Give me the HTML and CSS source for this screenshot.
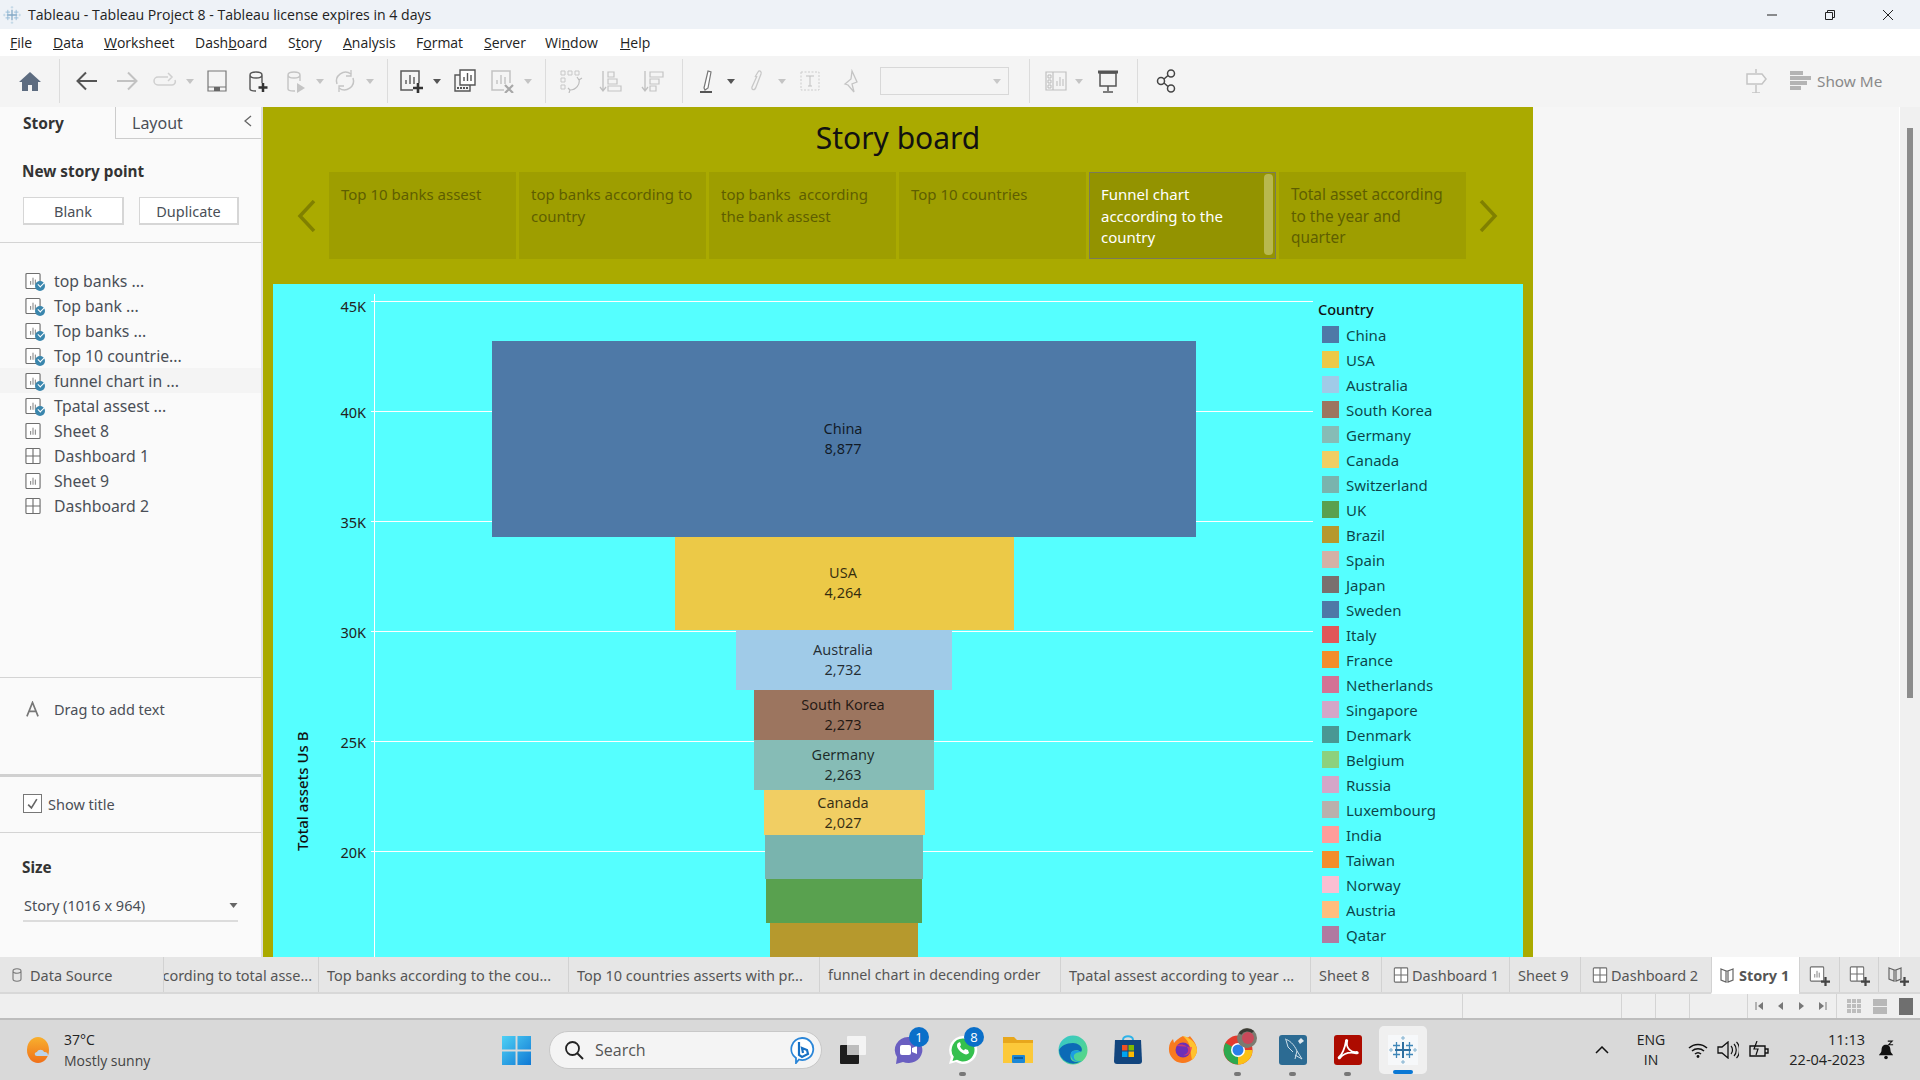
FILE: index.html
```html
<!DOCTYPE html>
<html lang="en">
<head>
<meta charset="utf-8">
<title>Tableau - Tableau Project 8</title>
<link rel="stylesheet" href="styles.css">
</head>
<body>
<svg class="defs" width="0" height="0" aria-hidden="true">
  <defs>
    <symbol id="tableau" viewBox="0 0 28 28">
      <g fill="none" stroke-linecap="butt">
        <path d="M14 6v16M6 14h16" stroke="#2f6f9f" stroke-width="2"/>
        <path d="M7.5 6v7M4 9.500h7M20.500 6v7M17 9.500h7M7.500 15v7M4 18.500h7M20.500 15v7M17 18.500h7" stroke="#3f86b8" stroke-width="1.300"/>
        <path d="M14 0v4M12 2h4M14 24v4M12 26h4M2 12v4M0 14h4M26 12v4M24 14h4" stroke="#7fb0cf" stroke-width="1"/>
      </g>
    </symbol>
    <symbol id="sheet" viewBox="0 0 17 18">
      <rect x="1" y="1" width="15" height="16" rx="1" fill="#fff" stroke="#6e6e6e" stroke-width="1.2"/>
      <path d="M6 13V9M8.5 13V5.500M11 13V7.500" stroke="#777" stroke-width="1"/>
    </symbol>
    <symbol id="dash" viewBox="0 0 17 18">
      <rect x="1" y="1" width="15" height="16" rx="1" fill="#fff" stroke="#6e6e6e" stroke-width="1.200"/>
      <path d="M8.500 1v16M1 9h15" stroke="#6e6e6e" stroke-width="1.200"/>
    </symbol>
    <symbol id="book" viewBox="0 0 14 16">
      <path d="M1 2l5 2v11l-5-2zM13 2L8 4v11l5-2zM6 4h2" fill="none" stroke="#666" stroke-width="1.200"/>
    </symbol>
    <symbol id="plus" viewBox="0 0 8 8">
      <path d="M4 0v8M0 4h8" stroke="#444" stroke-width="2"/>
    </symbol>
    <symbol id="ddarrow" viewBox="0 0 8 8">
      <path d="M0 2h8L4 7z"/>
    </symbol>
  </defs>
</svg>

<header class="titlebar">
  <svg class="title-logo"><use href="#tableau"/></svg>
  <span class="title-text">Tableau - Tableau Project 8 - Tableau license expires in 4 days</span>
  <div class="winctl">
    <svg class="wc" viewBox="0 0 12 12"><path d="M1 6h10" stroke="#222" fill="none"/></svg>
    <svg class="wc" viewBox="0 0 12 12"><path d="M1.500 3.500h7v7h-7zM3.500 3.500v-2h7v7h-2" stroke="#222" fill="none"/></svg>
    <svg class="wc" viewBox="0 0 12 12"><path d="M1 1l10 10M11 1L1 11" stroke="#222" fill="none"/></svg>
  </div>
</header>

<nav class="menubar">
  <span class="m1"><u>F</u>ile</span>
  <span class="m2"><u>D</u>ata</span>
  <span class="m3"><u>W</u>orksheet</span>
  <span class="m4">Dash<u>b</u>oard</span>
  <span class="m5">S<u>t</u>ory</span>
  <span class="m6"><u>A</u>nalysis</span>
  <span class="m7">F<u>o</u>rmat</span>
  <span class="m8"><u>S</u>erver</span>
  <span class="m9">Wi<u>n</u>dow</span>
  <span class="m10"><u>H</u>elp</span>
</nav>

<div class="toolbar">
  <svg class="ti" viewBox="0 0 24 24"><path d="M12 3L1 13h3v9h6v-6h4v6h6v-9h3z" fill="#5d6c80"/></svg>
  <i class="tdiv"></i>
  <svg class="ti" viewBox="0 0 24 24"><path d="M22 12H3M11 3.500L2.500 12l8.500 8.500" fill="none" stroke="#555" stroke-width="2"/></svg>
  <svg class="ti" viewBox="0 0 24 24"><path d="M2 12h19M13 3.500l8.500 8.500-8.500 8.500" fill="none" stroke="#c2c2c2" stroke-width="2"/></svg>
  <svg class="ti" viewBox="0 0 24 24"><path d="M15 8H5a3.500 3.500 0 0 0 0 8h14a3.500 3.500 0 0 0 3-5M15 4l4 4-4 4" fill="none" stroke="#cfcfcf" stroke-width="1.500"/></svg>
  <svg class="dd off"><use href="#ddarrow"/></svg>
  <svg class="ti" viewBox="0 0 24 24"><path d="M3 2h18v20H3zM3 18h18" fill="none" stroke="#777" stroke-width="1.200"/><rect x="9" y="18" width="6" height="4" fill="#666"/></svg>
  <svg class="ti" viewBox="0 0 24 24"><path d="M5 6v14c0 1 2 2 6 2M5 6c0-2 3-3 6-3s6 1 6 3-3 3-6 3-6-1-6-3zM17 6v8" fill="none" stroke="#555" stroke-width="1.400"/><path d="M18 14v9M13.500 18.500h9" stroke="#333" stroke-width="2.500"/></svg>
  <svg class="ti" viewBox="0 0 24 24"><path d="M5 6v14c0 1 2 2 6 2h1M5 6c0-2 3-3 6-3s6 1 6 3-3 3-6 3-6-1-6-3zM17 6v6" fill="none" stroke="#c4c4c4" stroke-width="1.400"/><path d="M14 14l8 5-8 5z" fill="#c4c4c4"/></svg>
  <svg class="dd off"><use href="#ddarrow"/></svg>
  <svg class="ti" viewBox="0 0 24 24"><path d="M4 15A9 9 0 0 1 18 5M20 9a9 9 0 0 1-14 10" fill="none" stroke="#c4c4c4" stroke-width="1.500"/><path d="M18 1v6h-5M6 23v-6h5" fill="none" stroke="#c4c4c4" stroke-width="1.300"/></svg>
  <svg class="dd off"><use href="#ddarrow"/></svg>
  <i class="tdiv"></i>
  <svg class="ti" viewBox="0 0 24 24"><path d="M14 21H2V2h18v12" fill="none" stroke="#5a5a5a" stroke-width="1.500"/><path d="M7 15v-4M11 15V6M15 15V8" stroke="#5a5a5a" stroke-width="1.400"/><path d="M19 14v10M14 19h10" stroke="#333" stroke-width="2.600"/></svg>
  <svg class="dd on"><use href="#ddarrow"/></svg>
  <svg class="ti" viewBox="0 0 24 24"><path d="M7 1h15v15H7z" fill="#fff" stroke="#555" stroke-width="1.400"/><path d="M11 12V8M14.500 12V4M18 12V6" stroke="#555" stroke-width="1.400"/><path d="M7 6H2v16h15v-6" fill="none" stroke="#555" stroke-width="1.400"/><path d="M4 19h11" stroke="#555" stroke-dasharray="2 1" stroke-width="2"/></svg>
  <svg class="ti" viewBox="0 0 24 24"><path d="M14 21H2V2h18v12" fill="none" stroke="#c2c2c2" stroke-width="1.500"/><path d="M7 15v-4M11 15V6M15 15V8" stroke="#c2c2c2" stroke-width="1.400"/><path d="M15 16l8 8M23 16l-8 8" stroke="#a8a8a8" stroke-width="2.200"/></svg>
  <svg class="dd off"><use href="#ddarrow"/></svg>
  <i class="tdiv"></i>
  <svg class="ti" viewBox="0 0 24 24"><path d="M2 2h4v4H2zM9 2h4v4H9zM16 2h4v4h-4zM2 9h4v4H2zM2 16h4v4H2z" fill="none" stroke="#c8c8c8"/><path d="M20 10a9 9 0 0 1-9 11M18 8l2 3 3-2M9 19l2 2-1 3" fill="none" stroke="#bdbdbd" stroke-width="1.200"/></svg>
  <svg class="ti" viewBox="0 0 24 24"><path d="M4 2v20M1 18l3 4 3-4" fill="none" stroke="#c0c0c0" stroke-width="1.300"/><path d="M9 3h6v5H9zM9 10h9v5H9zM9 17h13v5H9z" fill="none" stroke="#c4c4c4" stroke-width="1.200"/></svg>
  <svg class="ti" viewBox="0 0 24 24"><path d="M4 2v20M1 18l3 4 3-4" fill="none" stroke="#c0c0c0" stroke-width="1.300"/><path d="M9 3h13v5H9zM9 10h9v5H9zM9 17h6v5H9z" fill="none" stroke="#c4c4c4" stroke-width="1.200"/></svg>
  <i class="tdiv"></i>
  <svg class="ti" viewBox="0 0 24 24"><path d="M7 19l4-17 3 1-3 16-3 2z" fill="#fff" stroke="#777" stroke-width="1.200"/><path d="M3 23h12" stroke="#555" stroke-width="2"/></svg>
  <svg class="dd on"><use href="#ddarrow"/></svg>
  <svg class="ti" viewBox="0 0 24 24"><path d="M9 8l3-5c1-2 4-1 3 2l-5 13c-1 4-5 3-4 0l5-11" fill="none" stroke="#c8c8c8" stroke-width="1.300"/></svg>
  <svg class="dd off"><use href="#ddarrow"/></svg>
  <svg class="ti" viewBox="0 0 24 24"><path d="M3 3h18v18H3z" fill="none" stroke="#ccc" stroke-dasharray="2 1.500"/><path d="M8 7h8M12 7v10M10 17h4" fill="none" stroke="#c0c0c0"/></svg>
  <svg class="ti" viewBox="0 0 24 24"><path d="M14 2l5 11-5 2 2 8-6-7-3-1 6-5z" fill="none" stroke="#c4c4c4" stroke-width="1.300"/></svg>
  <div class="combo"><svg class="dd combo-arrow"><use href="#ddarrow"/></svg></div>
  <i class="tdiv"></i>
  <svg class="ti" viewBox="0 0 24 24"><path d="M1 3h20v18H1zM8 3v18" fill="none" stroke="#c0c0c0" stroke-width="1.200"/><path d="M3 6h3v3H3zM3 11h3v3H3zM3 16h3v3H3z" fill="none" stroke="#bbb"/><path d="M12 17v-5M15 17V8M18 17v-7" stroke="#bbb"/></svg>
  <svg class="dd off"><use href="#ddarrow"/></svg>
  <svg class="ti" viewBox="0 0 24 24"><path d="M2 3h20" stroke="#555" stroke-width="3"/><path d="M4 4h16v13H4zM12 17v5M7 23h10" fill="none" stroke="#555" stroke-width="1.500"/></svg>
  <i class="tdiv"></i>
  <svg class="ti" viewBox="0 0 24 24"><circle cx="16" cy="4.500" r="3.500" fill="none" stroke="#444" stroke-width="1.500"/><circle cx="6" cy="12" r="3.500" fill="none" stroke="#444" stroke-width="1.500"/><circle cx="16" cy="19.500" r="3.500" fill="none" stroke="#444" stroke-width="1.500"/><path d="M9 10l4-3.500M9 14l4 3.500" stroke="#444" stroke-width="1.500"/></svg>
  <svg class="ti" viewBox="0 0 24 24"><path d="M12 0v4M12 16v8M8 24h8" stroke="#c4c4c4" stroke-width="1.500"/><path d="M3 5h15l4 5-4 5H3z" fill="#f8f8f8" stroke="#c4c4c4" stroke-width="1.500"/></svg>
  <div class="showme-bars"><i class="sb1"></i><i class="sb2"></i><i class="sb3"></i><i class="sb4"></i></div>
  <span class="showme">Show Me</span>
</div>

<main class="main">
  <aside class="sidebar">
    <div class="side-tabs">
      <div class="stab active">Story</div>
      <div class="stab">Layout
        <svg class="collapse" viewBox="0 0 8 12"><path d="M7 1L1 6l6 5" fill="none" stroke="#666" stroke-width="1.300"/></svg>
      </div>
    </div>
    <section class="newpoint">
      <h3 class="side-h">New story point</h3>
      <div class="btns">
        <button class="btn b1">Blank</button>
        <button class="btn b2">Duplicate</button>
      </div>
    </section>
    <ul class="sheetlist">
      <li><span class="ic"><svg class="si"><use href="#sheet"/></svg><b class="chk"></b></span>top banks ...</li>
      <li><span class="ic"><svg class="si"><use href="#sheet"/></svg><b class="chk"></b></span>Top bank ...</li>
      <li><span class="ic"><svg class="si"><use href="#sheet"/></svg><b class="chk"></b></span>Top banks ...</li>
      <li><span class="ic"><svg class="si"><use href="#sheet"/></svg><b class="chk"></b></span>Top 10 countrie...</li>
      <li class="hl"><span class="ic"><svg class="si"><use href="#sheet"/></svg><b class="chk"></b></span>funnel chart in ...</li>
      <li><span class="ic"><svg class="si"><use href="#sheet"/></svg><b class="chk"></b></span>Tpatal assest ...</li>
      <li><span class="ic"><svg class="si"><use href="#sheet"/></svg></span>Sheet 8</li>
      <li><span class="ic"><svg class="si"><use href="#dash"/></svg></span>Dashboard 1</li>
      <li><span class="ic"><svg class="si"><use href="#sheet"/></svg></span>Sheet 9</li>
      <li><span class="ic"><svg class="si"><use href="#dash"/></svg></span>Dashboard 2</li>
    </ul>
    <section class="dragtext">
      <svg class="a-ic" viewBox="0 0 14 16"><path d="M1 16L7 1l6 15M3.500 10.500h7" fill="none" stroke="#777" stroke-width="1.800"/></svg>
      <span>Drag to add text</span>
    </section>
    <section class="showtitle">
      <span class="checkbox"><svg viewBox="0 0 12 12"><path d="M2 7l3 3 5-8" fill="none" stroke="#666" stroke-width="1.500"/></svg></span>
      <span>Show title</span>
    </section>
    <section class="sizesec">
      <h3 class="side-h">Size</h3>
      <div class="sizesel">Story (1016 x 964)<svg class="dd size-arrow"><use href="#ddarrow"/></svg></div>
    </section>
  </aside>

  <div class="story">
    <h1 class="story-title">Story board</h1>
    <div class="pointsrow">
      <svg class="navarrow" viewBox="0 0 20 32"><path d="M17 1L3 16l14 15" fill="none" stroke="#808000" stroke-width="3.500"/></svg>
      <div class="points">
        <div class="pt">Top 10 banks assest</div>
        <div class="pt">top banks according to country</div>
        <div class="pt">top banks&nbsp; according the bank assest</div>
        <div class="pt">Top 10 countries</div>
        <div class="pt cur">Funnel chart acccording to the country<i class="pt-scroll"></i></div>
        <div class="pt last">Total asset according to the year and quarter</div>
      </div>
      <svg class="navarrow" viewBox="0 0 20 32"><path d="M3 1l14 15L3 31" fill="none" stroke="#808000" stroke-width="3.500"/></svg>
    </div>
    <div class="viz">
      <div class="axis-title"><span>Total assets Us B</span></div>
      <div class="ticks">
        <div>45K</div><div>40K</div><div>35K</div><div>30K</div><div>25K</div><div>20K</div>
      </div>
      <div class="plot">
        <div class="grid"><i></i><i></i><i></i><i></i><i></i><i></i></div>
        <div class="funnel">
          <div class="bar c-china">China<br>8,877</div>
          <div class="bar c-usa">USA<br>4,264</div>
          <div class="bar c-aus">Australia<br>2,732</div>
          <div class="bar c-kor">South Korea<br>2,273</div>
          <div class="bar c-ger">Germany<br>2,263</div>
          <div class="bar c-can">Canada<br>2,027</div>
          <div class="bar c-swi"></div>
          <div class="bar c-uk"></div>
          <div class="bar c-bra"></div>
        </div>
      </div>
      <div class="legend">
        <div class="legend-title">Country</div>
        <div class="lg"><i class="s1"></i>China</div>
        <div class="lg"><i class="s2"></i>USA</div>
        <div class="lg"><i class="s3"></i>Australia</div>
        <div class="lg"><i class="s4"></i>South Korea</div>
        <div class="lg"><i class="s5"></i>Germany</div>
        <div class="lg"><i class="s6"></i>Canada</div>
        <div class="lg"><i class="s7"></i>Switzerland</div>
        <div class="lg"><i class="s8"></i>UK</div>
        <div class="lg"><i class="s9"></i>Brazil</div>
        <div class="lg"><i class="s10"></i>Spain</div>
        <div class="lg"><i class="s11"></i>Japan</div>
        <div class="lg"><i class="s1"></i>Sweden</div>
        <div class="lg"><i class="s12"></i>Italy</div>
        <div class="lg"><i class="s13"></i>France</div>
        <div class="lg"><i class="s14"></i>Netherlands</div>
        <div class="lg"><i class="s15"></i>Singapore</div>
        <div class="lg"><i class="s16"></i>Denmark</div>
        <div class="lg"><i class="s17"></i>Belgium</div>
        <div class="lg"><i class="s15"></i>Russia</div>
        <div class="lg"><i class="s18"></i>Luxembourg</div>
        <div class="lg"><i class="s19"></i>India</div>
        <div class="lg"><i class="s13"></i>Taiwan</div>
        <div class="lg"><i class="s20"></i>Norway</div>
        <div class="lg"><i class="s21"></i>Austria</div>
        <div class="lg"><i class="s22"></i>Qatar</div>
      </div>
    </div>
  </div>

  <div class="gutter"></div>
  <div class="vscroll"><i></i></div>
</main>

<div class="tabs">
  <div class="tab t1"><svg class="tab-ic" viewBox="0 0 10 14"><path d="M1 3v8c0 3 8 3 8 0V3M1 3c0-3 8-3 8 0s-8 3-8 0z" fill="none" stroke="#777" stroke-width="1.100"/></svg>Data Source</div>
  <div class="tab t2">cording to total asse...</div>
  <div class="tab t3">Top banks according to the cou...</div>
  <div class="tab t4">Top 10 countries asserts with pr...</div>
  <div class="tab t5">funnel chart in decending order</div>
  <div class="tab t6">Tpatal assest according to year ...</div>
  <div class="tab t7">Sheet 8</div>
  <div class="tab t8"><svg class="tab-ic2"><use href="#dash"/></svg>Dashboard 1</div>
  <div class="tab t9">Sheet 9</div>
  <div class="tab t10"><svg class="tab-ic2"><use href="#dash"/></svg>Dashboard 2</div>
  <div class="tab t11"><svg class="tab-ic3"><use href="#book"/></svg>Story 1</div>
  <div class="tab t12"><span class="ic-add"><svg class="tab-ic2"><use href="#sheet"/></svg><svg class="addp"><use href="#plus"/></svg></span></div>
  <div class="tab t13"><span class="ic-add"><svg class="tab-ic2"><use href="#dash"/></svg><svg class="addp"><use href="#plus"/></svg></span></div>
  <div class="tab t14"><span class="ic-add"><svg class="tab-ic3"><use href="#book"/></svg><svg class="addp"><use href="#plus"/></svg></span></div>
</div>

<div class="status">
  <div class="st s-a"></div>
  <div class="st s-b"></div>
  <div class="st s-c"></div>
  <div class="st s-d"></div>
  <div class="st s-g"></div>
  <div class="st s-e">
    <svg class="pg" viewBox="0 0 10 10"><path d="M1 1v8" stroke="#777" fill="none"/><path d="M8 1L3 5l5 4z" fill="#777"/></svg>
    <svg class="pg" viewBox="0 0 10 10"><path d="M7 1L2 5l5 4z" fill="#777"/></svg>
    <svg class="pg" viewBox="0 0 10 10"><path d="M3 1l5 4-5 4z" fill="#777"/></svg>
    <svg class="pg" viewBox="0 0 10 10"><path d="M9 1v8" stroke="#777" fill="none"/><path d="M2 1l5 4-5 4z" fill="#777"/></svg>
  </div>
  <div class="st s-f">
    <span class="v9"><i></i><i></i><i></i><i></i><i></i><i></i><i></i><i></i><i></i></span>
    <span class="v4"><i></i><i></i></span>
    <span class="v1"></span>
  </div>
</div>

<footer class="taskbar">
  <div class="weather">
    <svg class="w-ic" viewBox="0 0 28 28"><defs><linearGradient id="sun" x1="0" y1="0" x2="0" y2="1"><stop offset="0" stop-color="#f8b02e"/><stop offset="1" stop-color="#f0701a"/></linearGradient></defs><ellipse cx="12" cy="14" rx="11" ry="13" fill="url(#sun)"/><path d="M11 20c-3 0-3-4 0-4 1-3 6-3 7 0 3 0 4 1 4 4z" fill="#bcd3ea"/></svg>
    <div class="w-tx"><span class="w-t">37°C</span><span class="w-s">Mostly sunny</span></div>
  </div>
  <svg class="winlogo" viewBox="0 0 30 30"><defs><linearGradient id="wb" x1="0" y1="0" x2="1" y2="1"><stop offset="0" stop-color="#4fd1f5"/><stop offset="1" stop-color="#0f78d4"/></linearGradient></defs><path d="M0 0h14v14H0zM16 0h14v14H16zM0 16h14v14H0zM16 16h14v14H16z" fill="url(#wb)"/></svg>
  <div class="search">
    <svg class="s-ic" viewBox="0 0 20 20"><circle cx="8.500" cy="8.500" r="6.500" fill="none" stroke="#222" stroke-width="1.800"/><path d="M13 13l6 6" stroke="#222" stroke-width="2"/></svg>
    <span class="s-tx">Search</span>
    <svg class="bing" viewBox="0 0 26 28"><path d="M13 2a11 11 0 1 1-3 21.500L7 27v-5A11 11 0 0 1 13 2z" fill="#fff" stroke="#2a86d8" stroke-width="1.800"/><path d="M10 6v13l3 2 6-3-1-4-5-2 1 5" fill="none" stroke="#1670c4" stroke-width="2.200"/></svg>
  </div>
  <div class="tasks">
    <div class="task"><svg class="t-ic" viewBox="0 0 30 30"><rect x="9" y="1" width="19" height="19" rx="1" fill="#fff" opacity=".7"/><rect x="2" y="10" width="19" height="19" rx="1" fill="#1e1e1e"/><rect x="9" y="10" width="12" height="10" fill="#bdbdbd"/></svg></div>
    <div class="task"><svg class="t-ic" viewBox="0 0 30 30"><path d="M15 2a14 13 0 1 1-5 25l-7 2 1-7A14 13 0 0 1 15 2z" fill="#6a5fc1"/><rect x="7" y="10" width="11" height="10" rx="2" fill="#fff"/><path d="M19 13l5-2v8l-5-2z" fill="#fff"/></svg><b class="badge">1</b></div>
    <div class="task dot"><svg class="t-ic" viewBox="0 0 30 30"><path d="M15 1a14 14 0 1 1-7 26l-7 2 2-7A14 14 0 0 1 15 1z" fill="#fff"/><path d="M15 3.500a11.500 11.500 0 1 1-6 21.300l-4.500 1.300 1.300-4.400A11.500 11.500 0 0 1 15 3.500z" fill="#35c04e"/><path d="M10 8c-2 2-1 6 3 9s6 3 8 1l-1-3-3-1-1 1.500c-2-1-3-2-4-4l1-1.500-1-3z" fill="#fff"/></svg><b class="badge">8</b></div>
    <div class="task"><svg class="t-ic" viewBox="0 0 30 30"><path d="M0 2h11l3 3h16v5H0z" fill="#e8a71c"/><path d="M0 8h30v20H0z" fill="#fcc93a"/><rect x="9" y="20" width="13" height="8" rx="1" fill="#1b87d6"/><path d="M11 23h9" stroke="#0b4f8a" stroke-width="1.500"/></svg></div>
    <div class="task"><svg class="t-ic" viewBox="0 0 30 30"><defs><linearGradient id="eg" x1="0" y1="0" x2="1" y2="1"><stop offset="0" stop-color="#33c6d0"/><stop offset="1" stop-color="#5cd97a"/></linearGradient></defs><circle cx="15" cy="15" r="14.500" fill="url(#eg)"/><path d="M1 15a14 14 0 0 0 22 11c-9 3-12-2-10-8 1-3 7-4 10-1 3-4-2-9-8-9C8 8 3 11 1 15z" fill="#0c6ab6"/><path d="M13 18c-1 5 3 9 9 9l2-1c-6 1-9-2-8-6 1-2 4-3 7-3-3-2-9-2-10 1z" fill="#1b9de2"/></svg></div>
    <div class="task"><svg class="t-ic" viewBox="0 0 30 30"><path d="M10 5c0-5 10-5 10 0" fill="none" stroke="#2fb3e8" stroke-width="2"/><path d="M2 5h26l1 21a3 3 0 0 1-3 3H4a3 3 0 0 1-3-3z" fill="#12457e"/><path d="M9 10h5.500v5.500H9z" fill="#f25022"/><path d="M15.500 10H21v5.500h-5.500z" fill="#7fba00"/><path d="M9 16.500h5.500V22H9z" fill="#00a4ef"/><path d="M15.500 16.500H21V22h-5.500z" fill="#ffb900"/></svg></div>
    <div class="task"><svg class="t-ic" viewBox="0 0 30 30"><path d="M15 1c3 2 5 2 7 0 1 2 7 7 7 14A14 14 0 1 1 1 13c0-4 2-7 4-9l1 4c2-3 5-5 9-7z" fill="#f97a1e"/><path d="M15 1c6 1 14 7 14 14 0 3-2 8-5 10-2-9 0-16-9-24z" fill="#ffc22e"/><circle cx="15" cy="15" r="7.500" fill="#6d2fb8"/><path d="M8 11c3-2 7-2 10 0 4 3 2 9-3 9 4 2 9-3 9-8z" fill="#f03e5e" opacity=".7"/></svg></div>
    <div class="task dot"><svg class="t-ic" viewBox="0 0 30 30"><circle cx="15" cy="15" r="14.500" fill="#e33b2e"/><path d="M15 15L2.500 8A14.500 14.500 0 0 0 15 29.500L22 17z" fill="#2da94f"/><path d="M15 15h14.500A14.500 14.500 0 0 1 15 29.500z" fill="#fbc116"/><circle cx="15" cy="15" r="7" fill="#fff"/><circle cx="15" cy="15" r="5.500" fill="#2a7fe8"/></svg><svg class="avatar" viewBox="0 0 20 20"><circle cx="10" cy="10" r="10" fill="#7b7b70"/><circle cx="11" cy="10" r="6" fill="#c9495a"/><path d="M3 6c3-5 10-5 13-2" stroke="#3a3a34" stroke-width="3" fill="none"/></svg></div>
    <div class="task dot"><svg class="t-ic" viewBox="0 0 30 30"><rect x="1" y="0" width="28" height="30" rx="3" fill="#2c6b93"/><path d="M7 4c4 1 9 5 12 12l5 8-7-4M19 16l-2 8M8 5l2 7 5 5" fill="none" stroke="#cfe0ea" stroke-width="1"/><path d="M23 3l3 3-4 3-2-3z" fill="#dfe9ef"/></svg></div>
    <div class="task dot"><svg class="t-ic" viewBox="0 0 30 30"><rect x="1" y="0" width="28" height="30" rx="3" fill="#ad0b00"/><path d="M6 22c3-2 6-9 7-16 0-2 2-1 1 1-1 6 4 11 10 10 2 1 0 2-2 1-6-1-11 0-15 5-1 1-2 0-1-1z" fill="none" stroke="#fff" stroke-width="1.800"/></svg></div>
    <div class="task active"><svg class="t-ic tab-tile" viewBox="0 0 30 30"><rect width="30" height="30" fill="#f6f8fa"/><use href="#tableau" x="1" y="1" width="28" height="28"/></svg><i class="run"></i></div>
  </div>
  <div class="tray">
    <svg class="chev" viewBox="0 0 14 8"><path d="M1 7l6-6 6 6" fill="none" stroke="#111" stroke-width="1.500"/></svg>
    <div class="lang"><span>ENG</span><span>IN</span></div>
    <svg class="tr-ic wifi" viewBox="0 0 20 16"><path d="M1 6a13 13 0 0 1 18 0M4 9a9 9 0 0 1 12 0M7 12a4.500 4.500 0 0 1 6 0" fill="none" stroke="#111" stroke-width="1.500"/><circle cx="10" cy="14.500" r="1.400" fill="#111"/></svg>
    <svg class="tr-ic vol" viewBox="0 0 22 18"><path d="M1 6h4l6-5v16l-6-5H1z" fill="none" stroke="#111" stroke-width="1.300"/><path d="M14 5c2 2 2 6 0 8M17 3c3 3 3 9 0 12M19.500 1c4 4 4 12 0 16" fill="none" stroke="#111" stroke-width="1.200"/></svg>
    <svg class="tr-ic bat" viewBox="0 0 20 18"><path d="M1 5h15v10H1zM16 8h3v4h-3" fill="none" stroke="#111" stroke-width="1.400"/><path d="M8 0L5 8h4l-2 6" fill="none" stroke="#111" stroke-width="1.200"/></svg>
    <div class="clock"><span>11:13</span><span>22-04-2023</span></div>
    <svg class="tr-ic bell" viewBox="0 0 18 22"><path d="M9 5c-4 0-5 3-5 6 0 3-2 4-3 6h16c-1-2-3-3-3-6 0-3-1-6-5-6z" fill="#111"/><circle cx="9" cy="19.500" r="2" fill="#111"/><path d="M11 1h5l-4 4h5" fill="none" stroke="#111" stroke-width="1.200"/></svg>
  </div>
</footer>
</body>
</html>
```
FILE: styles.css
```css
* { box-sizing: border-box; }
html, body { margin: 0; padding: 0; }
body {
  width: 1920px; height: 1080px; overflow: hidden;
  display: flex; flex-direction: column;
  font-family: "Noto Sans", "Open Sans", sans-serif;
  color: #333; background: #f6f6f6;
}
.defs { position: absolute; }
i, b { display: block; }

/* title bar */
.titlebar { height: 29px; flex: none; background: #eef2f7; display: flex; align-items: center; font-family: "Open Sans", sans-serif; font-size: 14.100px; color: #222; }
.title-logo { width: 18px; height: 18px; margin-left: 3px; opacity: .55; }
.title-text { margin-left: 7px; }
.winctl { margin-left: auto; display: flex; gap: 46px; padding-right: 26px; }
.wc { width: 12px; height: 12px; }

/* menu */
.menubar { height: 27px; flex: none; background: #fff; display: grid; align-items: center; grid-template-columns: 43px 51px 91px 93px 55px 73px 68px 61px 75px auto; padding-left: 10px; font-family: "Open Sans", sans-serif; font-size: 14px; color: #222; }

/* toolbar */
.toolbar { height: 51px; flex: none; background: #f4f4f4; display: grid; align-items: center; padding: 0 0 2px 18px;
  grid-template-columns: 41px 16px 40px 38px 33px 19px 40px 38px 33px 17px 33px 21px 12px 34px 20px 37px 34px 21px 14px 40px 42px 41px 15px 30px 19px 32px 20px 40px 42px 149px 16px 30px 21px 41px 18px 589px 46px 27px auto; }
.ti { width: 24px; height: 24px; }
.dd { width: 8px; height: 8px; }
.dd.on { fill: #555; }
.dd.off { fill: #c4c4c4; }
.tdiv { width: 1px; height: 44px; background: #dcdcdc; }
.combo { width: 129px; height: 28px; border: 1px solid #d8d8d8; display: flex; align-items: center; justify-content: flex-end; padding-right: 7px; }
.combo-arrow { fill: #c8c8c8; }
.showme-bars { width: 21px; display: flex; flex-direction: column; gap: 1px; }
.showme-bars i { height: 4px; background: #b4b4b4; }
.sb1 { width: 13px; } .sb2 { width: 21px; } .sb3 { width: 17px; } .sb4 { width: 11px; }
.showme { font-size: 15.300px; color: #8a8a8a; white-space: nowrap; }

/* main */
.main { height: 850px; flex: none; display: flex; overflow: hidden; }
.sidebar { width: 263px; flex: none; background: #fafafa; border-right: 2px solid #dedede; display: flex; flex-direction: column; font-size: 15px; color: #4a4f57; }
.side-tabs { height: 32px; flex: none; display: flex; }
.stab { display: flex; align-items: center; padding-left: 23px; font-size: 16px; }
.stab.active { width: 115px; font-weight: 700; color: #333; font-size: 15.500px; padding-left: 23px; }
.stab:not(.active) { flex: 1; padding-left: 16px; border-left: 1px solid #ccc; border-bottom: 1px solid #ccc; position: relative; }
.collapse { position: absolute; right: 9px; top: 8px; width: 8px; height: 12px; }
.newpoint { height: 104px; flex: none; border-bottom: 1px solid #d4d4d4; padding: 21px 0 0 23px; }
.side-h { margin: 0 0 0 -1px; font-size: 15.300px; font-weight: 700; line-height: 22px; color: #333; }
.btns { display: flex; gap: 15px; margin-top: 15px; }
.btn { height: 28px; padding: 0; background: #fff; border: 1px solid #d6d6d6; border-bottom-width: 2px; border-right-width: 2px; font: inherit; font-size: 14.500px; color: #4a4f57; }
.b1 { width: 101px; } .b2 { width: 100px; }
.sheetlist { list-style: none; margin: 25px 0 0; padding: 0; flex: 1; }
.sheetlist li { height: 25px; display: flex; align-items: center; padding-left: 25px; font-size: 15.800px; white-space: nowrap; }
.sheetlist li.hl { background: #f4f4f4; }
.ic { width: 29px; height: 18px; flex: none; position: relative; display: block; }
.si { width: 16px; height: 18px; display: block; }
.chk { position: absolute; left: 10px; top: 9px; width: 10px; height: 10px; border-radius: 50%; background: #3a86ad; }
.chk::after { content: ""; position: absolute; left: 2.500px; top: 1.500px; width: 5px; height: 3px; border-left: 1.300px solid #fff; border-bottom: 1.300px solid #fff; transform: rotate(-45deg); }
.dragtext { height: 97px; flex: none; border-top: 1px solid #d4d4d4; display: flex; align-items: flex-start; padding: 20px 0 0 26px; font-size: 14.500px; line-height: 22px; }
.a-ic { width: 13px; height: 16px; margin: 3px 15px 0 0; flex: none; }
.showtitle { height: 59px; flex: none; border-top: 3px solid #d0d0d0; border-bottom: 1px solid #d4d4d4; display: flex; align-items: center; padding: 0 0 2px 23px; gap: 6px; font-size: 14.500px; }
.checkbox { width: 19px; height: 19px; border: 1px solid #777; background: #fff; display: block; padding: 2px; }
.checkbox svg { display: block; }
.sizesec { height: 124px; flex: none; padding: 23px 23px 0; }
.sizesel { position: relative; margin-top: 16px; height: 28px; border-bottom: 2px solid #dcdcdc; padding-left: 1px; font-size: 14.500px; line-height: 22px; }
.size-arrow { position: absolute; right: 0; top: 7px; fill: #666; width: 9px; }

/* story */
.story { width: 1270px; flex: none; background: #aaaa00; display: flex; flex-direction: column; overflow: hidden; }
.story-title { margin: 0; height: 65px; flex: none; padding-top: 6px; font-size: 30px; font-weight: 400; line-height: 50px; text-align: center; color: #111; }
.pointsrow { height: 87px; flex: none; display: flex; align-items: center; padding-left: 34px; }
.navarrow { width: 20px; height: 32px; flex: none; }
.points { display: flex; gap: 3px; height: 87px; margin: 0 12px; }
.pt { width: 187px; background: #9e9e00; padding: 12px 12px 0; font-size: 15px; line-height: 21.500px; color: #5e5e00; position: relative; }
.pt.last { font-size: 15.400px; }
.pt.cur { background: #939300; border: 1px solid #7a7a58; color: #fff; padding: 11px 20px 0 11px; }
.pt-scroll { position: absolute; right: 2px; top: 1px; bottom: 3px; width: 9px; border-radius: 4px; background: #b8b84e; }
.viz { margin: 25px 10px 0; height: 673px; flex: none; background: #55ffff; display: flex; overflow: hidden; }
.axis-title { width: 65px; flex: none; position: relative; font-size: 15px; font-weight: 500; color: #111; }
.axis-title span { position: absolute; left: 21px; top: 447px; height: 120px; writing-mode: vertical-rl; transform: rotate(180deg); white-space: nowrap; line-height: 16px; text-align: left; }
.ticks { width: 28px; flex: none; padding-top: 8px; font-size: 14.500px; color: #222; text-align: right; }
.ticks div { height: 110px; line-height: 20px; }
.ticks div:first-child { padding-top: 4px; }
.plot { width: 946px; flex: none; margin-left: 8px; position: relative; border-left: 1px solid #fff; margin-top: 10px; }
.grid { position: absolute; left: -4px; top: 7px; width: 942px; }
.grid i { height: 1px; background: #fff; margin-bottom: 109px; }
.funnel { position: relative; width: 938px; padding-top: 47px; display: flex; flex-direction: column; align-items: center; }
.bar { text-align: center; font-size: 14.500px; line-height: 20px; color: rgba(0,0,0,.78); display: flex; flex-direction: column; justify-content: center; flex: none; padding: 0 2px 2px 0; }
.c-china { width: 704px; height: 196px; background: #4e79a7; }
.c-usa { width: 339px; height: 93px; background: #ecc947; padding-bottom: 4px; }
.c-aus { width: 216px; height: 60px; background: #a0cbe8; }
.c-kor { width: 180px; height: 50px; background: #9c755f; }
.c-ger { width: 180px; height: 50px; background: #86bcb6; }
.c-can { width: 161px; height: 45px; background: #f1ce63; }
.c-swi { width: 158px; height: 44px; background: #79b4ae; }
.c-uk { width: 156px; height: 44px; background: #59a14f; }
.c-bra { width: 148px; height: 40px; background: #b6992d; }
.legend { flex: none; margin-left: -2px; padding-top: 15px; font-size: 15px; color: rgba(0,30,40,.85); }
.legend-title { height: 27px; line-height: 20px; font-weight: 500; color: #111; font-size: 14.500px; }
.lg { height: 25px; display: flex; padding-left: 4px; gap: 7px; line-height: 18px; }
.lg i { width: 17px; height: 17px; flex: none; }
.s1 { background: #4e79a7; } .s2 { background: #ecc947; } .s3 { background: #a0cbe8; } .s4 { background: #9c755f; }
.s5 { background: #86bcb6; } .s6 { background: #f1ce63; } .s7 { background: #79b4ae; } .s8 { background: #59a14f; }
.s9 { background: #b6992d; } .s10 { background: #d4b1a6; } .s11 { background: #79706e; } .s12 { background: #e15759; }
.s13 { background: #f28e2b; } .s14 { background: #d37295; } .s15 { background: #d4a6c8; } .s16 { background: #499894; }
.s17 { background: #8cd17d; } .s18 { background: #bab0ac; } .s19 { background: #ff9d9a; } .s20 { background: #fabfd2; }
.s21 { background: #ffbe7d; } .s22 { background: #b07aa1; }
.gutter { flex: 1; background: #f6f6f6; }
.vscroll { width: 21px; flex: none; background: #f0f0f0; border-left: 1px solid #fff; padding: 21px 0 0 7px; }
.vscroll i { width: 6px; height: 570px; background: #8c8c8c; }

/* tabs */
.tabs { height: 37px; flex: none; background: #e6e6e6; border-bottom: 2px solid #d8d8d8; display: flex; font-size: 14.500px; color: #555; }
.tab { flex: none; display: flex; align-items: center; justify-content: flex-start; padding-left: 8px; white-space: nowrap; border-left: 1px solid #d2d2d2; overflow: hidden; }
.tab-ic { width: 10px; height: 14px; margin-right: 8px; flex: none; }
.tab-ic2 { width: 16px; height: 16px; margin-right: 3px; flex: none; }
.tab-ic3 { width: 14px; height: 16px; margin-right: 5px; flex: none; }
.t1 { width: 163px; border-left: 0; padding-left: 12px; }
.t2 { width: 155px; justify-content: flex-end; padding: 0 6px 0 0; letter-spacing: -.03px; }
.t3 { width: 250px; } .t4 { width: 251px; } .t5 { width: 241px; font-size: 14.250px; } .t6 { width: 250px; } .t7 { width: 71px; }
.t8 { width: 128px; padding-left: 11px; } .t9 { width: 71px; } .t10 { width: 131px; padding-left: 11px; }
.t11 { width: 88px; background: #fff; font-weight: 700; border-bottom: 2px solid #fff; height: 37px; padding-left: 8px; }
.t12 { width: 40px; } .t13 { width: 39px; } .t14 { flex: 1; }
.ic-add { position: relative; display: block; width: 20px; height: 20px; }
.ic-add svg.tab-ic2, .ic-add svg.tab-ic3 { display: block; margin: 1px 0 0 1px; }
.addp { position: absolute; right: -2px; bottom: -1px; width: 9px; height: 9px; }

/* status */
.status { height: 26px; flex: none; background: #efefef; border-bottom: 2px solid #bdbdbd; display: flex; }
.st { height: 24px; border-left: 1px solid #d4d4d4; flex: none; display: flex; align-items: center; }
.s-a { width: 1462px; border-left: 0; }
.s-b { width: 159px; } .s-c { width: 34px; } .s-d { width: 34px; } .s-g { width: 58px; }
.s-e { width: 89px; gap: 10.500px; padding-left: 7px; }
.st.s-f { flex: 1; gap: 12px; padding-left: 10px; }
.pg { width: 10px; height: 10px; }
.v9 { display: grid; grid-template-columns: repeat(3, 4px); gap: 1px; }
.v9 i { width: 4px; height: 4px; background: #bdbdbd; }
.v4 { display: grid; gap: 1px; width: 14px; }
.v4 i { height: 7px; background: #b8b8b8; }
.v1 { width: 14px; height: 17px; background: #6f6f6f; display: block; }

/* taskbar */
.taskbar { height: 60px; flex: none; background: #d9d9d9; display: flex; align-items: center; font-family: "Open Sans", sans-serif; color: #222; font-size: 14px; }
.weather { width: 502px; flex: none; display: flex; align-items: center; padding-left: 26px; }
.w-ic { width: 28px; height: 28px; flex: none; }
.w-tx { display: flex; flex-direction: column; margin-left: 10px; line-height: 21px; }
.w-s { color: #444; }
.winlogo { width: 29px; height: 29px; flex: none; }
.search { width: 273px; height: 38px; margin-left: 18px; flex: none; background: #f4f4f4; border-radius: 19px; border: 1px solid #c8c8c8; display: flex; align-items: center; padding-left: 14px; font-size: 16px; color: #555; }
.s-ic { width: 20px; height: 20px; flex: none; }
.s-tx { margin-left: 11px; }
.bing { width: 26px; height: 28px; margin-left: auto; margin-right: 6px; }
.tasks { display: flex; margin-left: 3px; height: 60px; }
.task { width: 55px; height: 60px; position: relative; display: flex; align-items: center; justify-content: center; flex: none; }
.t-ic { width: 30px; height: 30px; }
.badge { position: absolute; left: 29px; top: 7px; width: 20px; height: 20px; border-radius: 50%; background: #0a6fc9; color: #fff; font-size: 13px; font-weight: 400; line-height: 20px; text-align: center; }
.task.dot::after { content: ""; position: absolute; left: 24px; bottom: 4px; width: 7px; height: 4px; border-radius: 2px; background: #777; }
.avatar { position: absolute; left: 27px; top: 8px; width: 20px; height: 20px; }
.task.active::before { content: ""; position: absolute; left: 4px; top: 6px; width: 48px; height: 48px; border-radius: 5px; background: #f0f0f0; }
.task.active .t-ic { position: relative; }
.run { position: absolute; left: 18px; bottom: 6px; width: 20px; height: 4px; border-radius: 2px; background: #0a78d4; }
.tray { flex: 1; display: flex; align-items: center; height: 60px; padding-left: 165px; }
.chev { width: 14px; height: 8px; flex: none; }
.lang { display: flex; flex-direction: column; align-items: center; width: 30px; margin-left: 27px; line-height: 20px; }
.tr-ic { flex: none; }
.wifi { width: 20px; height: 16px; margin-left: 22px; }
.vol { width: 22px; height: 18px; margin-left: 9px; }
.bat { width: 20px; height: 18px; margin-left: 10px; }
.clock { display: flex; flex-direction: column; align-items: flex-end; width: 82px; margin-left: 14px; line-height: 20px; white-space: nowrap; font-size: 14.500px; }
.bell { width: 16px; height: 22px; margin-left: 13px; }
```
